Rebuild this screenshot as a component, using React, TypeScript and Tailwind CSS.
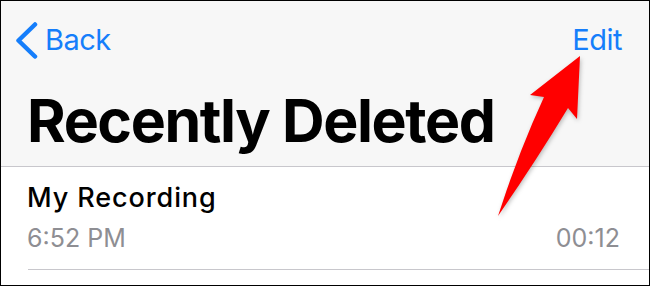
import React from "react";

export default function App() {
  return (
    <div
      className="relative w-[650px] h-[286px] border border-black bg-white overflow-hidden flex flex-col"
      style={{ fontFamily: "Inter, 'Liberation Sans', sans-serif" }}
    >
      <div className="h-[166px] bg-[#f7f7f7] border-b border-[#c8c7cc] flex flex-col">
        <div className="flex items-start justify-between pt-[21px] pl-[14px] pr-[27px]">
          <div className="flex items-start">
            <svg width="24" height="38" viewBox="0 0 24 38">
              <path
                d="M20 2.5 L3.5 18.5 L20 34.5"
                fill="none"
                stroke="#157efb"
                strokeWidth="4.5"
                strokeLinecap="round"
                strokeLinejoin="round"
              />
            </svg>
            <span className="ml-[6px] mt-[3px] text-[29px] leading-none text-[#157efb] tracking-[-0.5px]">
              Back
            </span>
          </div>
          <span className="mt-[3px] text-[29px] leading-none text-[#157efb] tracking-[-0.5px]">
            Edit
          </span>
        </div>
        <div className="pl-[26px] mt-[31px] text-[59px] font-bold leading-none text-black tracking-[-1.4px]">
          Recently Deleted
        </div>
      </div>
      <div className="pl-[26px] pr-[29px] pt-[17px]">
        <div className="text-[27px] font-medium leading-none text-black tracking-[0.9px]">
          My Recording
        </div>
        <div className="mt-[15px] flex justify-between text-[25px] leading-none text-[#8e8e93]">
          <span>6:52 PM</span>
          <span>00:12</span>
        </div>
      </div>
      <div className="ml-[27px] mt-[18px] border-b border-[#c8c7cc]" />
      <svg
        className="absolute left-0 top-0 pointer-events-none"
        width="650"
        height="286"
        style={{ filter: "drop-shadow(1px 2px 2px rgba(0,0,0,0.25))" }}
      >
        <path
          d="M579 55 L576 118 L567 107 Q535 160 497 215 Q518 150 543 96 L529 94 Z"
          fill="#ff0000"
        />
      </svg>
    </div>
  );
}
